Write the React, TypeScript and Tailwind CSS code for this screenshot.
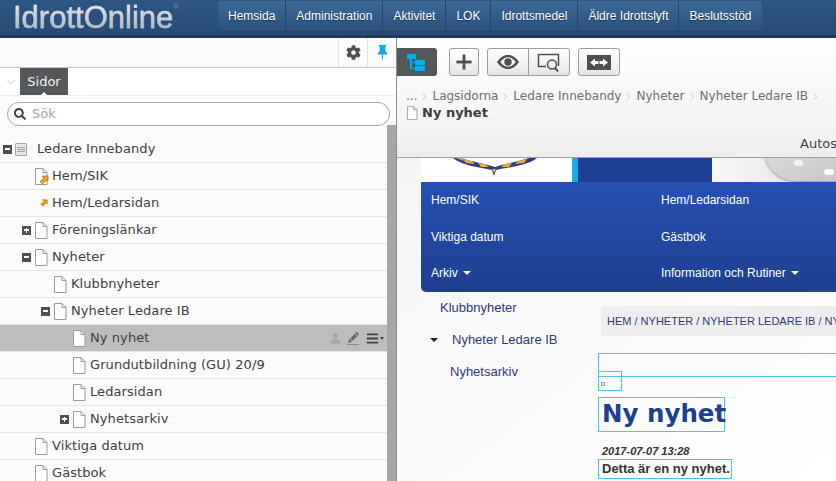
import { ChevronDown, ChevronRight, Plus } from "lucide-react";
import { FaCog, FaSearch, FaUser, FaBars } from "react-icons/fa";
import { BsPinFill, BsPencilFill } from "react-icons/bs";

const navItems = ["Hemsida", "Administration", "Aktivitet", "LOK", "Idrottsmedel", "Äldre Idrottslyft", "Beslutsstöd"];

const PageIcon = ({ fill = "#fff", small = false }: { fill?: string; small?: boolean }) => (
  <svg width={small ? 12 : 14} height={small ? 14 : 17} viewBox="0 0 14 17" className="shrink-0">
    <path d="M1.5 .5H9L13 4.5V16.5H1.5Z" fill={fill} stroke="#9a9a9a" />
    <path d="M9 .5V4.5H13" fill="none" stroke="#9a9a9a" />
  </svg>
);

const LinkArrow = () => (
  <svg width="10" height="10" viewBox="0 0 10 10">
    <path d="M3 1H9V6L7.5 5 3.5 9 1 6.5 5 3Z" fill="#eda321" stroke="#a8660d" strokeWidth=".7" />
  </svg>
);

const Toggle = ({ open }: { open: boolean }) => (
  <span className="w-[9px] h-[9px] bg-[#4d4f53] flex items-center justify-center relative shrink-0">
    <span className="w-[5px] h-[1.5px] bg-white" />
    {!open && <span className="absolute w-[1.5px] h-[5px] bg-white" />}
  </span>
);

type Row = { label: string; indent: number; toggle?: boolean; open?: boolean; icon?: "page" | "link" | "linkonly"; selected?: boolean };

const rows: Row[] = [
  { label: "Hem/SIK", indent: 34, icon: "link" },
  { label: "Hem/Ledarsidan", indent: 34, icon: "linkonly" },
  { label: "Föreningslänkar", indent: 22, toggle: true, open: false },
  { label: "Nyheter", indent: 22, toggle: true, open: true },
  { label: "Klubbnyheter", indent: 53 },
  { label: "Nyheter Ledare IB", indent: 41, toggle: true, open: true },
  { label: "Ny nyhet", indent: 72, selected: true },
  { label: "Grundutbildning (GU) 20/9", indent: 72 },
  { label: "Ledarsidan", indent: 72 },
  { label: "Nyhetsarkiv", indent: 60, toggle: true, open: false },
  { label: "Viktiga datum", indent: 34 },
  { label: "Gästbok", indent: 34 },
];

const TreeRow = ({ row }: { row: Row }) => (
  <div className={`h-[27px] shrink-0 border-b border-[#e4e6e4] flex items-center ${row.selected ? "bg-[#bdbdbd]" : ""}`}>
    <div className="flex items-center gap-[3px]" style={{ paddingLeft: row.indent }}>
      {row.toggle && <Toggle open={!!row.open} />}
      {row.icon === "linkonly" ? (
        <span className="w-[14px] h-[17px] flex items-center justify-center pl-[6px]">
          <LinkArrow />
        </span>
      ) : (
        <span className="relative flex">
          <PageIcon />
          {row.icon === "link" && (
            <span className="absolute -right-[1px] bottom-0 flex">
              <LinkArrow />
            </span>
          )}
        </span>
      )}
      <span className="pl-[1px] text-[13px] tracking-[0.08px] text-[#3e4144] whitespace-nowrap">{row.label}</span>
    </div>
    {row.selected && (
      <div className="ml-auto flex items-center gap-[7px] pr-[3px]">
        <FaUser size={11} color="#a8a8a8" />
        <span className="relative flex pb-[1px]">
          <BsPencilFill size={11} color="#6a6a6a" />
          <span className="absolute -left-[1px] right-0 -bottom-[1px] h-px bg-[#8a8a8a]" />
        </span>
        <span className="flex items-center gap-[1px]">
          <FaBars size={13} color="#444" />
          <span className="border-x-[2px] border-x-transparent border-t-[3px] border-t-[#444]" />
        </span>
      </div>
    )}
  </div>
);

const Crumb = ({ label }: { label: string }) => (
  <span className="flex items-center gap-[2px]">
    <span>{label}</span>
    <ChevronRight size={11} stroke="#999" strokeWidth={1.2} />
  </span>
);

export default function App() {
  return (
    <div className="w-[836px] h-[481px] overflow-hidden flex flex-col bg-white font-['DejaVu_Sans',sans-serif]">
      {/* top bar */}
      <header className="h-[38px] shrink-0 flex bg-gradient-to-b from-[#2f5684] to-[#284a75] border-b-[3px] border-[#203a5e]">
        <div className="w-[218px] shrink-0 pl-[13px] flex items-start">
          <span className="pt-[1px] text-[31px] leading-[34px] font-['Liberation_Sans',sans-serif] bg-gradient-to-b from-[#f6f6f6] to-[#9aa9ba] bg-clip-text text-transparent [-webkit-text-stroke:0.4px_#c8ced6]">
            IdrottOnline
          </span>
          <span className="text-[7px] mt-[2px] text-[#7f93ab] font-['Liberation_Sans',sans-serif]">®</span>
        </div>
        <nav className="flex h-[31px] mt-[1px] rounded-[3px] overflow-hidden bg-gradient-to-b from-[#3d6997] to-[#2b507c] border-b border-[#23456d]">
          {navItems.map((n, i) => (
            <span
              key={n}
              className={`h-full flex items-center px-[10px] text-[12px] text-white [text-shadow:0_1px_1px_#1c3350] font-['Liberation_Sans',sans-serif] ${i ? "border-l border-[#23456d]" : ""}`}
            >
              {n}
            </span>
          ))}
        </nav>
      </header>

      <div className="flex-1 flex min-h-0">
        {/* left panel */}
        <aside className="w-[397px] shrink-0 flex flex-col border-r border-[#8d8d8d] bg-[#fafbfa]">
          <div className="h-[30px] shrink-0 border-b border-[#c4c4c4] flex justify-end bg-[#fbfbfb]">
            <div className="w-[29px] border-l border-[#e2e2e2] flex items-center justify-center">
              <FaCog size={15} color="#4d4f53" />
            </div>
            <div className="w-[29px] border-l border-[#e2e2e2] flex items-center justify-center">
              <BsPinFill size={15} color="#14a9e6" />
            </div>
          </div>
          <div className="h-[28px] shrink-0 flex bg-white border-b border-[#f0f0f0]">
            <span className="w-[20px] flex items-center justify-center pl-[2px]">
              <ChevronDown size={14} stroke="#c4c4c4" strokeWidth={1.5} />
            </span>
            <span className="relative w-[48px] bg-[#55585a] text-[#f2f2f2] text-[13px] flex items-center justify-center">
              Sidor
              <span className="absolute bottom-0 left-[21px] border-x-[3px] border-x-transparent border-b-[3px] border-b-white" />
            </span>
          </div>
          <div className="flex flex-1 min-h-0">
            <div className="flex-1 min-w-0 flex flex-col bg-[#fafbfa]">
              <div className="pt-[6px] pl-[7px] relative z-10 w-[390px] shrink-0">
                <div className="h-[24px] rounded-full border border-[#a8a8a8] bg-white flex items-center pl-[6px] gap-[6px]">
                  <FaSearch size={12} color="#3c3f42" />
                  <span className="text-[13px] text-[#a5a5a5]">Sök</span>
                </div>
              </div>
              <div className="mt-[10px] h-[27px] shrink-0 border-b border-[#e4e6e4] flex items-center pl-[3px]">
                <Toggle open />
                <span className="ml-[3px] w-[12px] h-[13px] rounded-[1px] bg-[#e8e8e8] border border-[#a3a3a3] flex flex-col justify-center gap-[1px] px-[1px] shrink-0">
                  <span className="h-px bg-[#a3a3a3]" />
                  <span className="h-px bg-[#a3a3a3]" />
                  <span className="h-px bg-[#a3a3a3]" />
                </span>
                <span className="ml-[10px] text-[13px] tracking-[0.08px] text-[#3e4144] whitespace-nowrap">Ledare Innebandy</span>
              </div>
              {rows.map((r) => (
                <TreeRow key={r.label} row={r} />
              ))}
            </div>
            <div className="w-[9px] shrink-0 bg-[#fafbfa] flex flex-col pt-[29px]">
              <div className="flex-1 bg-[#a6a6a6]" />
            </div>
          </div>
        </aside>

        {/* right panel */}
        <main className="flex-1 min-w-0 flex flex-col overflow-hidden">
          <div className="h-[120px] shrink-0 border-b border-[#a0a0a0] bg-gradient-to-b from-white to-[#eeeeee] flex flex-col">
            <div className="flex items-start pt-[10px] h-[38px] shrink-0">
              <button className="w-[40px] h-[28px] rounded-r-[3px] bg-[#55585a] flex items-center justify-center pr-[2px]">
                <svg width="18" height="17" viewBox="0 0 18 17">
                  <rect x="0" y="0" width="9" height="5" fill="#14a9e6" />
                  <rect x="3" y="5" width="2" height="10" fill="#14a9e6" />
                  <rect x="5" y="8" width="3" height="1" fill="#14a9e6" />
                  <rect x="5" y="14" width="3" height="1" fill="#14a9e6" />
                  <rect x="8" y="6" width="10" height="5" fill="#14a9e6" />
                  <rect x="8" y="12" width="10" height="5" fill="#14a9e6" />
                </svg>
              </button>
              <button className="ml-[12px] w-[30px] h-[28px] rounded-[3px] border border-[#9c9c9c] bg-gradient-to-b from-white to-[#e6e6e6] flex items-center justify-center">
                <Plus size={26} stroke="#4d4f53" strokeWidth={2.6} strokeLinecap="butt" />
              </button>
              <div className="ml-[8px] w-[83px] h-[28px] rounded-[3px] border border-[#9c9c9c] bg-gradient-to-b from-white to-[#e6e6e6] flex">
                <span className="w-[41px] border-r border-[#9c9c9c] flex items-center justify-center">
                  <svg width="22" height="14" viewBox="0 0 22 14">
                    <path d="M0 7C4 1.5 7.5 0 11 0S18 1.5 22 7C18 12.5 14.500 14 11 14S4 12.500 0 7Z" fill="#4d4f53" />
                    <path d="M3.200 7C6 3.500 8.500 2.300 11 2.300S16 3.500 18.800 7C16 10.500 13.500 11.700 11 11.700S6 10.500 3.200 7Z" fill="#f4f4f4" />
                    <circle cx="11" cy="7" r="3.700" fill="#4d4f53" />
                  </svg>
                </span>
                <span className="flex-1 flex items-center justify-center">
                  <svg width="24" height="20" viewBox="0 0 24 20" fill="none" stroke="#4d4f53">
                    <path d="M9 14.500H1.500V2.500H21.500V14" strokeWidth="1.500" />
                    <circle cx="15" cy="12.500" r="4.500" strokeWidth="1.500" />
                    <path d="M18 16L21 19.500" strokeWidth="2" />
                  </svg>
                </span>
              </div>
              <button className="ml-[8px] w-[42px] h-[28px] rounded-[3px] border border-[#9c9c9c] bg-gradient-to-b from-white to-[#e6e6e6] flex items-center justify-center">
                <svg width="24" height="15" viewBox="0 0 24 15">
                  <rect width="24" height="15" fill="#4d4f53" />
                  <path d="M3 7.500L8 3.500V6H11.500V9H8V11.500ZM21 7.500L16 3.500V6H12.500V9H16V11.500Z" fill="#fff" />
                </svg>
              </button>
            </div>
            <div className="pl-[9px] pt-[12px] flex items-center gap-[2px] text-[12px] leading-[16px] text-[#6b6e70] whitespace-nowrap">
              <Crumb label="..." />
              <Crumb label="Lagsidorna" />
              <Crumb label="Ledare Innebandy" />
              <Crumb label="Nyheter" />
              <Crumb label="Nyheter Ledare IB" />
            </div>
            <div className="pl-[9px] pt-[1px] flex items-center gap-[4px]">
              <PageIcon fill="#fbfbfb" small />
              <span className="text-[13px] leading-[16px] font-bold text-[#3a3c3e]">Ny nyhet</span>
            </div>
            <div className="pl-[403px] pt-[15px] text-[13px] leading-[16px] text-[#3e4144] whitespace-nowrap">Autos</div>
          </div>

          <div className="flex-1 min-h-0 bg-gradient-to-br from-[#f5f5f5] to-white pl-[24px] font-['Liberation_Sans',sans-serif] overflow-hidden">
            {/* site banner */}
            <div className="h-[24px] w-[415px] flex overflow-hidden">
              <div className="w-[151px] bg-white flex">
                <svg width="84" height="19" viewBox="0 0 84 19" className="ml-[32px]">
                  <path d="M0 0C10 8 26 9 39 12L41 18L43 12C56 9 74 8 84 0H76C64 4 50 6 42 9C34 6 20 4 8 0Z" fill="#2b3f7c" />
                  <path d="M10 1L19 3 22 6 13 5ZM25 5L32 6 36 9 28 9ZM74 1L65 3 62 6 71 5ZM59 5L52 6 48 9 56 9ZM3 0L9 0 11 3ZM39 11H43L41 15Z" fill="#eba93a" />
                </svg>
              </div>
              <div className="w-[6px] bg-[#18ace6]" />
              <div className="w-[134px] bg-[#1f3f95]" />
              <div className="w-[124px] relative bg-gradient-to-r from-[#f8f8f8] to-[#dedede] overflow-hidden">
                <span className="absolute left-[52px] -top-[42px] w-[150px] h-[65px] rounded-full bg-gradient-to-br from-[#e8e8e8] to-[#bcbcbc] shadow-[0_1px_3px_#8a8a8a]" />
                <span className="absolute left-[82px] top-[2px] w-[9px] h-[6px] rounded-full bg-[#f4f4f4]" />
                <span className="absolute left-[112px] top-[11px] w-[10px] h-[6px] rounded-full bg-[#fbfbfb]" />
              </div>
            </div>
            {/* site nav */}
            <div className="w-[415px] h-[110px] rounded-bl-[5px] bg-gradient-to-b from-[#2650b4] to-[#1f3f8f] text-white text-[12px] grid grid-cols-[230px_1fr] grid-rows-[36px_37px_37px] pl-[10px]">
              <span className="flex items-center">Hem/SIK</span>
              <span className="flex items-center">Hem/Ledarsidan</span>
              <span className="flex items-center">Viktiga datum</span>
              <span className="flex items-center">Gästbok</span>
              <span className="flex items-center gap-[5px] pb-[1px]">
                Arkiv
                <span className="border-x-[4px] border-x-transparent border-t-[4px] border-t-white" />
              </span>
              <span className="flex items-center gap-[5px] pb-[1px]">
                Information och Rutiner
                <span className="border-x-[4px] border-x-transparent border-t-[4px] border-t-white" />
              </span>
            </div>

            <div className="flex pt-[6px]">
              <div className="w-[180px] shrink-0 text-[13px] text-[#303a78] leading-[20px] whitespace-nowrap flex flex-col gap-[12px] pl-[19px]">
                <span>Klubbnyheter</span>
                <span className="flex items-center gap-[14px] -ml-[10px]">
                  <span className="border-x-[4px] border-x-transparent border-t-[4px] border-t-[#222]" />
                  Nyheter Ledare IB
                </span>
                <span className="pl-[10px]">Nyhetsarkiv</span>
              </div>
              <div className="flex-1 min-w-0 pt-[8px] -ml-[3px]">
                <div className="h-[30px] ml-[3px] bg-[#eeeeee] flex items-center pl-[6px] text-[11px] text-[#303a78] whitespace-nowrap overflow-hidden">
                  HEM / NYHETER / NYHETER LEDARE IB / NY
                </div>
                <div className="mt-[17px] h-[24px] border border-[#4cc3ec] border-r-0" />
                <div className="-mt-[6px] w-[24px] h-[20px] border border-[#4cc3ec] flex items-end pl-[2px] pb-[4px]">
                  <span className="w-[4px] h-[4px] border border-[#9a9a9a]" />
                </div>
                <div className="mt-[6px] w-[127px] h-[35px] border border-[#4cc3ec] flex items-center pl-[3px] font-['DejaVu_Sans',sans-serif] font-bold text-[24.5px] text-[#1c3f8f] whitespace-nowrap">
                  Ny nyhet
                </div>
                <div className="mt-[13px] pl-[4px] text-[11px] leading-[13px] font-bold italic text-[#333]">2017-07-07 13:28</div>
                <div className="mt-[1px] w-[134px] h-[20px] border border-[#4cc3ec] flex items-center pl-[3px] text-[13px] font-bold text-[#333] whitespace-nowrap">
                  Detta är en ny nyhet.
                </div>
              </div>
            </div>
          </div>
        </main>
      </div>
    </div>
  );
}
